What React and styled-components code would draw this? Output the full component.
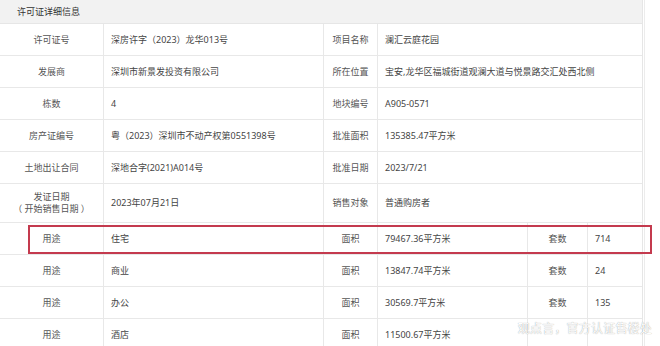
import React from 'react';
import styled, { createGlobalStyle } from 'styled-components';

const GlobalStyle = createGlobalStyle`
  html, body {
    margin: 0;
    padding: 0;
    background: #ffffff;
  }
  body {
    font-family: "Noto Sans", "Noto Sans CJK SC", sans-serif;
    font-size: 9px;
    color: #444;
  }
`;

const Page = styled.div`
  position: relative;
  width: 660px;
  height: 346px;
  overflow: hidden;
`;

const Panel = styled.div`
  width: 644px;
  border-right: 1px solid #ececec;
`;

const Table = styled.div`
  width: 642px;
  border-right: 1px solid #e6e6e6;
`;

const Heading = styled.div`
  height: 23px;
  padding-left: 17px;
  display: flex;
  align-items: center;
  background: #f2f2f2;
  border-bottom: 1px solid #e6e6e6;
  color: #333;
`;

const Row = styled.div`
  position: relative;
  display: grid;
  grid-template-columns: ${(p) => p.$cols};
  height: ${(p) => p.$h || 32}px;
  border-bottom: 1px solid #e8e8e8;
  box-sizing: border-box;
`;

const Cell = styled.div`
  display: flex;
  flex-direction: column;
  justify-content: center;
  align-items: ${(p) => (p.$label ? 'center' : 'flex-start')};
  text-align: ${(p) => (p.$label ? 'center' : 'left')};
  padding-left: ${(p) => (p.$label ? 0 : 7)}px;
  color: ${(p) => (p.$label ? '#555' : '#444')};
  line-height: 12px;
  white-space: nowrap;
  & + & {
    border-left: 1px solid #e8e8e8;
  }
`;

const Highlight = styled.div`
  position: absolute;
  left: 28px;
  right: -10px;
  top: 2px;
  bottom: 0;
  border: 2px solid #c43a4e;
  pointer-events: none;
`;

const Watermark = styled.div`
  position: absolute;
  right: 8px;
  bottom: 10px;
  font-family: "Noto Sans CJK SC", sans-serif;
  font-size: 12px;
  color: #ffffff;
  text-shadow: 0 0 1px rgba(0, 0, 0, 0.45);
  letter-spacing: 0.2px;
`;

const INFO_COLS = '103px 220px 54px 1fr';
const USE_COLS = '103px 220px 54px 150px 60px 1fr';

const info = [
  ['许可证号', '深房许字（2023）龙华013号', '项目名称', '澜汇云庭花园'],
  ['发展商', '深圳市新景发投资有限公司', '所在位置', '宝安,龙华区福城街道观澜大道与悦景路交汇处西北侧'],
  ['栋数', '4', '地块编号', 'A905-0571'],
  ['房产证编号', '粤（2023）深圳市不动产权第0551398号', '批准面积', '135385.47平方米'],
  ['土地出让合同', '深地合字(2021)A014号', '批准日期', '2023/7/21'],
];

const uses = [
  { kind: '住宅', area: '79467.36平方米', count: '714', marked: true },
  { kind: '商业', area: '13847.74平方米', count: '24' },
  { kind: '办公', area: '30569.7平方米', count: '135' },
  { kind: '酒店', area: '11500.67平方米', count: '', hidden: true },
];

const App = () => {
  return (
    <Page>
      <GlobalStyle />
      <Panel>
        <Table>
          <Heading>许可证详细信息</Heading>

          {info.map((r) => (
            <Row key={r[0]} $cols={INFO_COLS}>
              <Cell $label>{r[0]}</Cell>
              <Cell>{r[1]}</Cell>
              <Cell $label>{r[2]}</Cell>
              <Cell>{r[3]}</Cell>
            </Row>
          ))}

          <Row $cols={INFO_COLS} $h={39}>
            <Cell $label>
              <span>发证日期</span>
              <span>（ 开始销售日期 ）</span>
            </Cell>
            <Cell>2023年07月21日</Cell>
            <Cell $label>销售对象</Cell>
            <Cell>普通购房者</Cell>
          </Row>

          {uses.map((u) => (
            <Row key={u.kind} $cols={USE_COLS}>
              <Cell $label>用途</Cell>
              <Cell>{u.kind}</Cell>
              <Cell $label>面积</Cell>
              <Cell>{u.area}</Cell>
              <Cell $label>{u.hidden ? '' : '套数'}</Cell>
              <Cell>{u.count}</Cell>
              {u.marked && <Highlight />}
            </Row>
          ))}
        </Table>
      </Panel>
      <Watermark>观点言，官方认证售楼处</Watermark>
    </Page>
  );
};

export default App;
